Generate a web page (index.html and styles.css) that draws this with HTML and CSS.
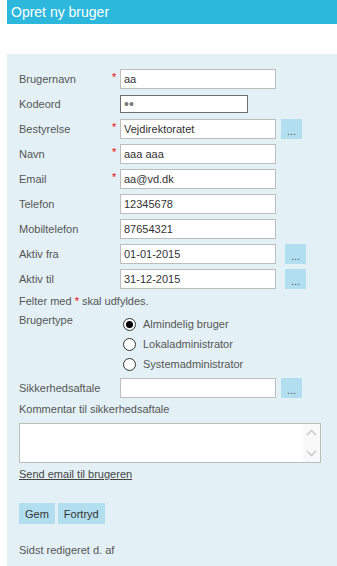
FILE: index.html
```html
<!DOCTYPE html>
<html lang="da">
<head>
  <meta charset="UTF-8" />
  <meta name="viewport" content="width=device-width, initial-scale=1.0" />
  <title>Opret ny bruger</title>
  <link rel="stylesheet" href="styles.css">
</head>
<body>
  <div id="page">
    <h1 class="title">Opret ny bruger</h1>

    <form class="panel">
      <div class="fields">
        <div class="row">
          <label class="lbl" for="brugernavn">Brugernavn</label><span class="req">*</span>
          <input class="txt" type="text" id="brugernavn" value="aa" />
        </div>
        <div class="row">
          <label class="lbl" for="kodeord">Kodeord</label><span class="req"></span>
          <input class="txt pwd" type="password" id="kodeord" value="aa" />
        </div>
        <div class="row">
          <label class="lbl" for="bestyrelse">Bestyrelse</label><span class="req">*</span>
          <input class="txt" type="text" id="bestyrelse" value="Vejdirektoratet" />
          <button type="button" class="pick">...</button>
        </div>
        <div class="row">
          <label class="lbl" for="navn">Navn</label><span class="req">*</span>
          <input class="txt" type="text" id="navn" value="aaa aaa" />
        </div>
        <div class="row">
          <label class="lbl" for="email">Email</label><span class="req">*</span>
          <input class="txt" type="text" id="email" value="aa@vd.dk" />
        </div>
        <div class="row">
          <label class="lbl" for="telefon">Telefon</label><span class="req"></span>
          <input class="txt" type="text" id="telefon" value="12345678" />
        </div>
        <div class="row">
          <label class="lbl" for="mobil">Mobiltelefon</label><span class="req"></span>
          <input class="txt" type="text" id="mobil" value="87654321" />
        </div>
        <div class="row">
          <label class="lbl" for="fra">Aktiv fra</label><span class="req"></span>
          <input class="txt" type="text" id="fra" value="01-01-2015" />
          <button type="button" class="pick date">...</button>
        </div>
        <div class="row">
          <label class="lbl" for="til">Aktiv til</label><span class="req"></span>
          <input class="txt" type="text" id="til" value="31-12-2015" />
          <button type="button" class="pick date">...</button>
        </div>
      </div>

      <p class="note">Felter med <span class="star">*</span> skal udfyldes.</p>

      <div class="type-row">
        <span class="type-lbl">Brugertype</span>
        <div class="radios">
          <label class="opt"><input type="radio" name="type" checked /> Almindelig bruger</label>
          <label class="opt"><input type="radio" name="type" /> Lokaladministrator</label>
          <label class="opt"><input type="radio" name="type" /> Systemadministrator</label>
        </div>
      </div>

      <div class="row agreement">
        <label class="lbl" for="aftale">Sikkerhedsaftale</label><span class="req"></span>
        <input class="txt" type="text" id="aftale" value="" />
        <button type="button" class="pick">...</button>
      </div>

      <p class="comment-lbl">Kommentar til sikkerhedsaftale</p>
      <div class="comment-box">
        <textarea class="comment"></textarea>
        <div class="scroll">
          <svg width="11" height="7" viewBox="0 0 11 7"><path d="M1 6 L5.5 1.5 L10 6" fill="none" stroke="#c6c6c6" stroke-width="1.3"/></svg>
          <svg width="11" height="7" viewBox="0 0 11 7"><path d="M1 1 L5.5 5.5 L10 1" fill="none" stroke="#c6c6c6" stroke-width="1.3"/></svg>
        </div>
      </div>

      <a class="mail-link" href="#">Send email til brugeren</a>

      <div class="actions">
        <button type="button" class="btn">Gem</button>
        <button type="button" class="btn">Fortryd</button>
      </div>

      <p class="edited">Sidst redigeret d. af</p>
    </form>
  </div>
</body>
</html>
```

FILE: styles.css
```css
body {
  margin: 0;
  font-family: "Liberation Sans", Arial, sans-serif;
  font-size: 11px;
  color: #555;
  background: #fff;
}

#page {
  margin-left: 7px;
}

.title {
  margin: 0;
  height: 24px;
  line-height: 24px;
  padding-left: 4px;
  background: #2cb8dc;
  color: #fff;
  font-size: 14px;
  font-weight: normal;
}

.panel {
  margin-top: 30px;
  background: #e3f1f6;
  padding: 15px 12px 20px 12px;
}

.fields {
  display: flex;
  flex-direction: column;
  gap: 5px;
}

.row {
  display: flex;
  align-items: center;
  height: 20px;
}

.lbl {
  width: 93px;
}

.req {
  width: 8px;
  color: #e00;
  align-self: flex-start;
  line-height: 16px;
}

.txt {
  box-sizing: border-box;
  width: 156px;
  height: 20px;
  margin: 0;
  padding: 0 3px;
  border: 1px solid #bdbdbd;
  background: #fff;
  font-family: inherit;
  font-size: 11px;
  color: #333;
  outline: none;
}

.txt.pwd {
  width: 128px;
  height: 18px;
  border-color: #6e6e6e;
  color: #7a7a7a;
  font-size: 14px;
  letter-spacing: 0;
}

.pick {
  width: 21px;
  height: 20px;
  margin-left: 5px;
  padding: 4px 0 0 0;
  border: none;
  background: #b2dff0;
  font-family: inherit;
  font-size: 11px;
  color: #555;
}

.pick.date {
  margin-left: 9px;
}

.note {
  margin: 6px 0 0 0;
  line-height: 13px;
}

.star {
  color: #e00;
}

.type-row {
  display: flex;
  margin-top: 6px;
}

.type-lbl {
  width: 104px;
  line-height: 13px;
}

.radios {
  display: flex;
  flex-direction: column;
}

.opt {
  display: flex;
  align-items: center;
  height: 20px;
  gap: 7px;
  color: #555;
}

.opt input {
  appearance: none;
  -webkit-appearance: none;
  width: 13px;
  height: 13px;
  margin: 0;
  border: 1px solid #333;
  border-radius: 50%;
  background: #fff;
  display: grid;
  place-items: center;
}

.opt input:checked::after {
  content: "";
  width: 7px;
  height: 7px;
  border-radius: 50%;
  background: #000;
}

.agreement {
  margin-top: 4px;
}

.comment-lbl {
  margin: 5px 0 0 0;
  line-height: 13px;
}

.comment-box {
  display: flex;
  width: 302px;
  height: 40px;
  box-sizing: border-box;
  margin-top: 7px;
  border: 1px solid #bdbdbd;
  background: #fff;
}

.comment {
  flex: 1;
  border: none;
  resize: none;
  outline: none;
  padding: 2px;
  font-family: inherit;
  font-size: 11px;
}

.scroll {
  width: 17px;
  background: #f9f9f9;
  display: flex;
  flex-direction: column;
  justify-content: space-between;
  align-items: center;
  padding: 5px 0 5px 0;
}

.mail-link {
  display: block;
  margin-top: 5px;
  line-height: 13px;
  color: #444;
  text-decoration: underline;
}

.actions {
  display: flex;
  gap: 3px;
  margin-top: 22px;
}

.btn {
  height: 21px;
  padding: 0 6px;
  border: none;
  background: #b2dff0;
  font-family: inherit;
  font-size: 11px;
  color: #333;
}

.edited {
  margin: 20px 0 0 0;
  line-height: 13px;
}
```
